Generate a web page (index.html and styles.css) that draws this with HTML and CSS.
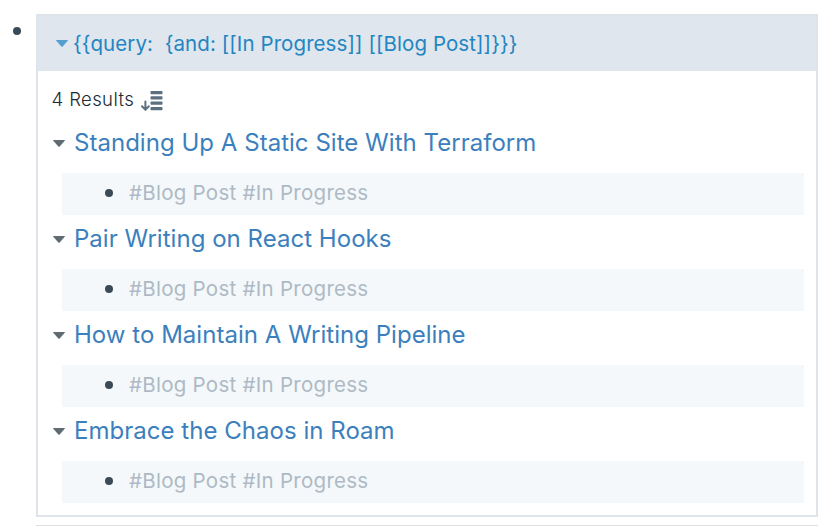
FILE: index.html
```html
<!DOCTYPE html>
<html lang="en">
<head>
<meta charset="utf-8">
<title>Query</title>
<link rel="stylesheet" href="styles.css">
</head>
<body>
<div class="block">
<span class="dot outer"></span>
<main class="query">
<header class="head"><svg class="caret" viewBox="0 0 12 7"><path d="M.7 0H11.3Q12.3 0 11.7.8L6.7 6.5Q6 7.2 5.3 6.5L.3.8Q-.3 0 .7 0Z"/></svg><span class="code">{{query:&nbsp; {and: [[In Progress]] [[Blog Post]]}}}</span></header>
<div class="body">
<div class="count"><span class="results">4 Results</span><svg class="sort" viewBox="0 0 22 20"><rect x="9.5" y="0" width="12" height="3.2" rx=".8"/><rect x="9.5" y="5.3" width="12" height="3.2" rx=".8"/><rect x="9.5" y="10.6" width="12" height="3.2" rx=".8"/><rect x="9.5" y="16" width="12" height="3.2" rx=".8"/><path class="arrow" d="M4.4 10.5V18M1 15.3L4.4 18.7L7.8 15.3"/></svg></div>
<section><h2><svg class="caret" viewBox="0 0 12 7"><path d="M.7 0H11.3Q12.3 0 11.7.8L6.7 6.5Q6 7.2 5.3 6.5L.3.8Q-.3 0 .7 0Z"/></svg><span class="title">Standing Up A Static Site With Terraform</span></h2><div class="item"><span class="dot"></span><span class="tags">#Blog Post #In Progress</span></div></section>
<section><h2><svg class="caret" viewBox="0 0 12 7"><path d="M.7 0H11.3Q12.3 0 11.7.8L6.7 6.5Q6 7.2 5.3 6.5L.3.8Q-.3 0 .7 0Z"/></svg><span class="title">Pair Writing on React Hooks</span></h2><div class="item"><span class="dot"></span><span class="tags">#Blog Post #In Progress</span></div></section>
<section><h2><svg class="caret" viewBox="0 0 12 7"><path d="M.7 0H11.3Q12.3 0 11.7.8L6.7 6.5Q6 7.2 5.3 6.5L.3.8Q-.3 0 .7 0Z"/></svg><span class="title">How to Maintain A Writing Pipeline</span></h2><div class="item"><span class="dot"></span><span class="tags">#Blog Post #In Progress</span></div></section>
<section><h2><svg class="caret" viewBox="0 0 12 7"><path d="M.7 0H11.3Q12.3 0 11.7.8L6.7 6.5Q6 7.2 5.3 6.5L.3.8Q-.3 0 .7 0Z"/></svg><span class="title">Embrace the Chaos in Roam</span></h2><div class="item"><span class="dot"></span><span class="tags">#Blog Post #In Progress</span></div></section>
</div>
</main>
</div>
<div class="rule"></div>
</body>
</html>
```
FILE: styles.css
```css
* { box-sizing: border-box; }
body { margin: 0; padding-top: 14px; background: #fff; font-family: Inter, sans-serif; font-weight: 400; overflow: hidden; }
.block { display: flex; }
.dot { width: 8px; height: 8px; border-radius: 50%; background: #394b59; flex: none; }
.outer { margin: 13px 15px 0 13px; }
.query { width: 782px; height: 503px; border: 2px solid #dee4ea; }
.head { height: 55px; background: #dfe6ed; display: flex; align-items: center; padding-left: 18px; font-size: 20.5px; letter-spacing: 0.08px; }
.caret { width: 12px; height: 7px; margin-right: 9px; fill: #5f6b73; flex: none; }
.head .caret { fill: #559fce; margin-right: 5px; }
.code { white-space: nowrap; color: #2385c2; }
.body { padding: 13px 12px 0 14px; }
.count { display: flex; height: 30px; align-items: center; margin-bottom: 5px; font-size: 18.5px; font-weight: 300; color: #202b33; }
.results { white-space: nowrap; width: 89px; letter-spacing: 0.4px; margin-left: -0.5px; }
.sort { width: 22px; height: 20px; fill: #5c7080; margin-top: 3px; }
.arrow { fill: none; stroke: #5c7080; stroke-width: 2; stroke-linecap: round; }
section { display: grid; grid-template-rows: 54px 42px; }
h2 { margin: 0; padding: 0 0 6px 1px; display: flex; align-items: center; font-weight: 400; font-size: 24px; line-height: 30px; letter-spacing: 0.03px; color: #3b80bd; }
.title { white-space: nowrap; }
.item { margin-left: 10px; background: #f5f8fa; display: flex; align-items: center; padding: 0 0 2px 43px; gap: 16px; color: #adbac5; font-size: 20.5px; letter-spacing: 0.27px; }
.tags { line-height: 24px; padding-bottom: 1px; }
.rule { height: 1px; background: #dce0e4; margin: 8px 19px 0 36px; }
```
